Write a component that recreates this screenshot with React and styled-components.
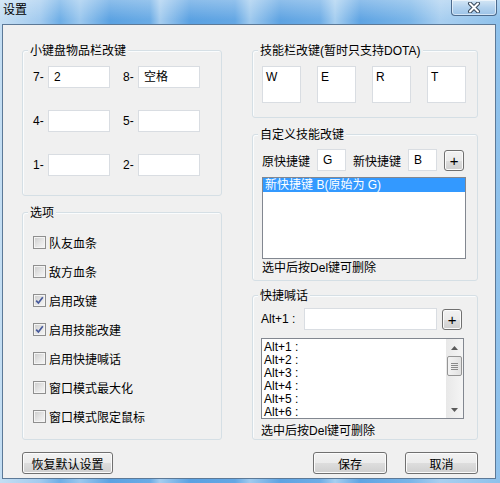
import React from 'react';
import styled, { createGlobalStyle } from 'styled-components';

const GlobalStyle = createGlobalStyle`
  html, body {
    margin: 0;
    padding: 0;
  }
  body {
    font-family: "Liberation Sans", "Noto Sans CJK SC", sans-serif;
    font-size: 12px;
    color: #000;
  }
`;

// aero frame round the dialog
const Window = styled.div`
  width: 500px;
  height: 483px;
  box-sizing: border-box;
  display: flex;
  flex-direction: column;
  padding: 0 4px 4px 2px;
  background:
    linear-gradient(180deg, rgba(255, 255, 255, 0.3) 0px, rgba(255, 255, 255, 0) 20px),
    linear-gradient(90deg, #c4def3 0%, #a3cbef 8%, #6eaee6 12%, #9cc8ee 16%, #5ba2e2 22%,
      #6aabe5 30%, #a6cdef 32%, #5aa1e2 38%, #64a7e4 47%, #a0caee 50%, #5ea3e2 56%,
      #6eade6 64%, #a7cff0 67%, #5fa4e3 72%, #7ab5e8 82%, #a9cff0 88%, #8ec1eb 100%);
`;

const TitleBar = styled.div`
  height: 24px;
  display: flex;
  justify-content: space-between;
  align-items: flex-start;
  padding-left: 1px;
`;

const TitleText = styled.span`
  margin-top: 3px;
  line-height: 14px;
  font-size: 12px;
  color: #000;
`;

const CloseButton = styled.div`
  width: 46px;
  height: 16px;
  box-sizing: border-box;
  margin-right: -1px;
  border: 1px solid #4c6a8c;
  border-top: none;
  border-radius: 0 0 4px 4px;
  background: linear-gradient(180deg, #d4e6f5 0%, #b3d2ee 50%, #9cc3e8 100%);
  box-shadow: inset 0 0 0 1px rgba(255, 255, 255, 0.55);
  display: flex;
  justify-content: center;
  align-items: center;
`;

const Client = styled.div`
  flex: 1;
  display: flex;
  flex-direction: column;
  background: #f0f0f0;
  border: 1px solid #5c7997;
  padding: 25px 17px 4px 19px;
`;

const Columns = styled.div`
  display: flex;
  gap: 30px;
`;

const Column = styled.div`
  width: ${p => p.$w}px;
  display: flex;
  flex-direction: column;
  gap: 16px;
`;

const GroupBox = styled.div`
  position: relative;
  box-sizing: border-box;
  height: ${p => p.$h}px;
  margin-top: ${p => p.$mt || 0}px;
  border: 1px solid #d5dfe5;
  border-radius: 3px;
  box-shadow: inset 1px 1px 0 #fafcfd;
  padding: ${p => p.$pad};
`;

const GroupTitle = styled.span`
  position: absolute;
  top: -8px;
  left: 5px;
  padding: 0 2px;
  line-height: 16px;
  background: #f0f0f0;
`;

const Stack = styled.div`
  display: flex;
  flex-direction: column;
  gap: ${p => p.$gap}px;
`;

const KeyRow = styled.div`
  display: flex;
  gap: 13px;
`;

const KeyCell = styled.div`
  display: flex;
  align-items: center;
`;

const KeyLabel = styled.span`
  width: 15px;
`;

const TextBox = styled.div`
  box-sizing: border-box;
  flex-shrink: 0;
  width: ${p => p.$w}px;
  height: ${p => p.$h || 22}px;
  background: #fff;
  border: 1px solid #d9dde2;
  padding: 3px ${p => p.$px || 5}px 0;
  line-height: 14px;
  overflow: hidden;
  white-space: nowrap;
`;

const CheckRow = styled.div`
  height: 29px;
  display: flex;
  align-items: center;
  gap: 3px;
`;

const CheckBox = styled.span`
  box-sizing: border-box;
  width: 13px;
  height: 13px;
  border: 1px solid #8f8f8f;
  background: linear-gradient(135deg, #cbcbcb 0%, #e6e6e6 55%, #f7f7f7 100%);
  box-shadow: inset 0 0 0 1px #f4f4f4;
  display: flex;
  align-items: center;
  justify-content: center;
`;

const SkillRow = styled.div`
  display: flex;
  justify-content: space-between;
`;

const InlineRow = styled.div`
  display: flex;
  align-items: center;
  gap: ${p => p.$gap}px;
`;

const FieldLabel = styled.span`
  flex-shrink: 0;
  width: ${p => (p.$w ? `${p.$w}px` : 'auto')};
  white-space: nowrap;
`;

const PlusButton = styled.div`
  box-sizing: border-box;
  flex-shrink: 0;
  width: 20px;
  height: 21px;
  margin-left: ${p => p.$ml || 0}px;
  border: 1px solid #707070;
  border-radius: 3px;
  background: linear-gradient(180deg, #f2f2f2 0%, #ebebeb 50%, #dddddd 51%, #cfcfcf 100%);
  box-shadow: inset 0 0 0 1px #fbfbfb;
  display: flex;
  align-items: center;
  justify-content: center;
  font-size: 15px;
  line-height: 1;
`;

const ListBox = styled.div`
  box-sizing: border-box;
  width: ${p => p.$w}px;
  height: ${p => p.$h}px;
  margin-top: ${p => p.$mt}px;
  background: #fff;
  border: 1px solid #828790;
  display: flex;
  overflow: hidden;
`;

const ListItems = styled.div`
  flex: 1;
  padding: ${p => p.$pad || '0'};
  overflow: hidden;
`;

const ListItem = styled.div`
  line-height: ${p => p.$lh || 14}px;
  padding-left: 2px;
  white-space: nowrap;
  background: ${p => (p.$selected ? '#3399ff' : 'transparent')};
  color: ${p => (p.$selected ? '#fff' : '#000')};
`;

const ScrollBar = styled.div`
  width: 17px;
  display: flex;
  flex-direction: column;
  background: linear-gradient(90deg, #e8e8e8, #f5f5f5);
`;

const ScrollArrow = styled.div`
  height: 17px;
  display: flex;
  align-items: center;
  justify-content: center;
`;

const ScrollTrack = styled.div`
  flex: 1;
`;

const ScrollThumb = styled.div`
  box-sizing: border-box;
  height: 20px;
  margin: 0 1px;
  border: 1px solid #959595;
  border-radius: 2px;
  background: linear-gradient(90deg, #f3f3f3, #e2e2e2);
  display: flex;
  flex-direction: column;
  align-items: center;
  justify-content: center;
  gap: 1px;
`;

const GripLine = styled.span`
  width: 7px;
  height: 1px;
  background: #8a8a8a;
`;

const Hint = styled.div`
  margin-top: ${p => p.$mt}px;
  line-height: 14px;
  white-space: nowrap;
`;

const Footer = styled.div`
  margin-top: auto;
  display: flex;
  align-items: flex-end;
  justify-content: space-between;
`;

const ButtonGroup = styled.div`
  display: flex;
  gap: 18px;
`;

const PushButton = styled.div`
  box-sizing: border-box;
  width: ${p => p.$w}px;
  height: 22px;
  border: 1px solid #707070;
  border-radius: 3px;
  background: linear-gradient(180deg, #f2f2f2 0%, #ebebeb 50%, #dddddd 51%, #cfcfcf 100%);
  box-shadow: inset 0 0 0 1px #fbfbfb;
  display: flex;
  align-items: center;
  justify-content: center;
  font-size: 12px;
`;

const CheckMark = () => (
  <svg width="9" height="9" viewBox="0 0 9 9">
    <path d="M1.2 4.6 L3.4 7 L7.8 1.2" fill="none" stroke="#46599b" strokeWidth="1.7" />
  </svg>
);

const CloseGlyph = () => (
  <svg width="14" height="11" viewBox="0 0 14 11">
    <path d="M3 1.5 L11 9.5 M11 1.5 L3 9.5" stroke="#3a4a5c" strokeWidth="4" strokeLinecap="round" />
    <path d="M3 1.5 L11 9.5 M11 1.5 L3 9.5" stroke="#fff" strokeWidth="2" strokeLinecap="round" />
  </svg>
);

const Arrow = ({ down }) => (
  <svg width="7" height="4" viewBox="0 0 7 4">
    <polygon points={down ? '0,0 7,0 3.5,4' : '0,4 7,4 3.5,0'} fill="#5a5a5a" />
  </svg>
);

const numpadRows = [
  [['7-', '2'], ['8-', '空格']],
  [['4-', ''], ['5-', '']],
  [['1-', ''], ['2-', '']],
];

const options = [
  ['队友血条', false],
  ['敌方血条', false],
  ['启用改键', true],
  ['启用技能改建', true],
  ['启用快捷喊话', false],
  ['窗口模式最大化', false],
  ['窗口模式限定鼠标', false],
];

const skillKeys = ['W', 'E', 'R', 'T'];

const phrases = [1, 2, 3, 4, 5, 6].map(n => `Alt+${n} :`);

export default function App() {
  return (
    <>
      <GlobalStyle />
      <Window>
        <TitleBar>
          <TitleText>设置</TitleText>
          <CloseButton>
            <CloseGlyph />
          </CloseButton>
        </TitleBar>
        <Client>
          <Columns>
            <Column $w={201}>
              <GroupBox $h={146} $pad="15px 0 0 10px">
                <GroupTitle>小键盘物品栏改键</GroupTitle>
                <Stack $gap={22}>
                  {numpadRows.map((row, i) => (
                    <KeyRow key={i}>
                      {row.map(([label, value]) => (
                        <KeyCell key={label}>
                          <KeyLabel>{label}</KeyLabel>
                          <TextBox $w={62}>{value}</TextBox>
                        </KeyCell>
                      ))}
                    </KeyRow>
                  ))}
                </Stack>
              </GroupBox>
              <GroupBox $h={228} $pad="15px 0 0 10px">
                <GroupTitle>选项</GroupTitle>
                {options.map(([label, checked]) => (
                  <CheckRow key={label}>
                    <CheckBox>{checked && <CheckMark />}</CheckBox>
                    <span>{label}</span>
                  </CheckRow>
                ))}
              </GroupBox>
            </Column>

            <Column $w={227}>
              <GroupBox $h={68} $pad="15px 11px 0 9px">
                <GroupTitle>技能栏改键(暂时只支持DOTA)</GroupTitle>
                <SkillRow>
                  {skillKeys.map(k => (
                    <TextBox key={k} $w={39} $h={37} $px={3}>{k}</TextBox>
                  ))}
                </SkillRow>
              </GroupBox>

              <GroupBox $h={147} $pad="14px 10px 0 9px">
                <GroupTitle>自定义技能改键</GroupTitle>
                <InlineRow $gap={7}>
                  <FieldLabel>原快捷键</FieldLabel>
                  <TextBox $w={29}>G</TextBox>
                  <FieldLabel>新快捷键</FieldLabel>
                  <TextBox $w={29}>B</TextBox>
                  <PlusButton>+</PlusButton>
                </InlineRow>
                <ListBox $w={204} $h={82} $mt={6}>
                  <ListItems>
                    <ListItem $selected>新快捷键 B(原始为 G)</ListItem>
                  </ListItems>
                </ListBox>
                <Hint $mt={2}>选中后按Del键可删除</Hint>
              </GroupBox>

              <GroupBox $h={145} $mt={-2} $pad="12px 10px 0 8px">
                <GroupTitle>快捷喊话</GroupTitle>
                <InlineRow $gap={0}>
                  <FieldLabel $w={43}>Alt+1 :</FieldLabel>
                  <TextBox $w={133} />
                  <PlusButton $ml={5}>+</PlusButton>
                </InlineRow>
                <ListBox $w={203} $h={81} $mt={8}>
                  <ListItems $pad="2px 0 0 0">
                    {phrases.map(p => (
                      <ListItem key={p} $lh={13}>{p}</ListItem>
                    ))}
                  </ListItems>
                  <ScrollBar>
                    <ScrollArrow>
                      <Arrow />
                    </ScrollArrow>
                    <ScrollThumb>
                      <GripLine />
                      <GripLine />
                      <GripLine />
                      <GripLine />
                    </ScrollThumb>
                    <ScrollTrack />
                    <ScrollArrow>
                      <Arrow down />
                    </ScrollArrow>
                  </ScrollBar>
                </ListBox>
                <Hint $mt={5}>选中后按Del键可删除</Hint>
              </GroupBox>
            </Column>
          </Columns>

          <Footer>
            <PushButton $w={91}>恢复默认设置</PushButton>
            <ButtonGroup>
              <PushButton $w={74}>保存</PushButton>
              <PushButton $w={73}>取消</PushButton>
            </ButtonGroup>
          </Footer>
        </Client>
      </Window>
    </>
  );
}
